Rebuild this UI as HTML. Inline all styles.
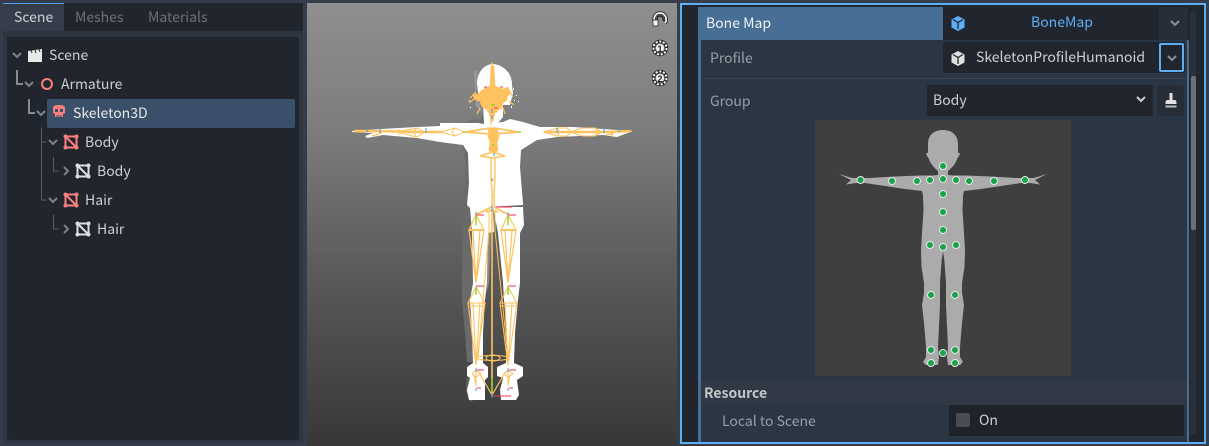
<!DOCTYPE html>
<html><head><meta charset="utf-8">
<style>
html,body{margin:0;padding:0;width:1209px;height:446px;overflow:hidden;background:#363d4a;}
body{position:relative;font-family:"Noto Sans CJK JP","Liberation Sans",sans-serif;font-size:14px;color:#cdcfd2;}
.a{position:absolute;}
.t{position:absolute;white-space:nowrap;line-height:20px;height:20px;}
svg{position:absolute;overflow:visible;}
</style></head><body>

<!-- LEFT DOCK -->
<div class="a" style="left:3px;top:3px;width:300px;height:440px;background:#262c36;"></div>
<div class="a" style="left:3px;top:3px;width:61px;height:28px;background:#363d4a;border-top:1px solid #569eea;box-sizing:border-box;"></div>
<div class="a" style="left:64px;top:3px;width:239px;height:28px;background:#21262e;"></div>
<div class="a" style="left:3px;top:31px;width:300px;height:412px;background:#2e3440;"></div>
<div class="t" style="left:14px;top:7px;">Scene</div>
<div class="t" style="left:75px;top:7px;color:#6c7078;">Meshes</div>
<div class="t" style="left:148px;top:7px;color:#6c7078;">Materials</div>
<div class="a" style="left:7px;top:37px;width:292px;height:403px;background:#21252d;border-radius:2px;"></div>
<div class="a" style="left:47px;top:99px;width:248px;height:29px;background:#3a5068;border-radius:2px;"></div>

<svg width="310" height="250" style="left:0;top:0" fill="none">
  <g stroke="#7d8188" stroke-width="2">
    <path d="M13 53l4 4 4-4M25 82l4 4 4-4M37 111l4 4 4-4M49 140l4 4 4-4M49 198l4 4 4-4"/>
    <path d="M64 167l4 4-4 4M64 225l4 4-4 4"/>
  </g>
  <path d="M17 70v14h6M29 99v14h6" stroke="#878b91" stroke-width="2"/>
  <path d="M41.500 128v72h5M41.500 142h5M53.500 157v14h5M53.500 215v14h5" stroke="#555a63" stroke-width="1"/>
  <path d="M28 51l14-2v4H28zM28 53h14v9H28z" fill="#e8e8e8"/>
  <path d="M31 50l1 3M35 50l1 3M39 49l1 3" stroke="#21252d"/>
  <circle cx="47" cy="84" r="5" stroke="#fc7f7f" stroke-width="2"/>
  <path d="M53 108c0-2 2-3 6-3s6 1 6 3v5l-2 1v3h-8v-3l-2-1z" fill="#fc7f7f"/>
  <path d="M55 109h3v3h-3zM60 109h3v3h-3z" fill="#3a5068"/>
  <path d="M57 115v2M59 115v2M61 115v2" stroke="#3a5068"/>
  <g stroke="#fc7f7f" stroke-width="2" fill="none">
    <path d="M65.500 136.500h11v11h-11zM65.500 136.500l11 11"/><path d="M65.500 194.500h11v11h-11zM65.500 194.500l11 11"/>
  </g>
  <g fill="#fc7f7f">
    <circle cx="65.500" cy="136.500" r="2"/><circle cx="76.500" cy="136.500" r="2"/><circle cx="65.500" cy="147.500" r="2"/><circle cx="76.500" cy="147.500" r="2"/>
    <circle cx="65.500" cy="194.500" r="2"/><circle cx="76.500" cy="194.500" r="2"/><circle cx="65.500" cy="205.500" r="2"/><circle cx="76.500" cy="205.500" r="2"/>
  </g>
  <g stroke="#e0e0e0" stroke-width="2" fill="none">
    <path d="M77.500 165.500h11v11h-11zM77.500 165.500l11 11"/><path d="M77.500 223.500h11v11h-11zM77.500 223.500l11 11"/>
  </g>
  <g fill="#e0e0e0">
    <circle cx="77.500" cy="165.500" r="2"/><circle cx="88.500" cy="165.500" r="2"/><circle cx="77.500" cy="176.500" r="2"/><circle cx="88.500" cy="176.500" r="2"/>
    <circle cx="77.500" cy="223.500" r="2"/><circle cx="88.500" cy="223.500" r="2"/><circle cx="77.500" cy="234.500" r="2"/><circle cx="88.500" cy="234.500" r="2"/>
  </g>
</svg>
<div class="t" style="left:49px;top:45px;">Scene</div>
<div class="t" style="left:61px;top:74px;">Armature</div>
<div class="t" style="left:73px;top:103px;color:#e6e8ea;">Skeleton3D</div>
<div class="t" style="left:85px;top:132px;">Body</div>
<div class="t" style="left:97px;top:161px;">Body</div>
<div class="t" style="left:85px;top:190px;">Hair</div>
<div class="t" style="left:97px;top:219px;">Hair</div>

<!-- VIEWPORT -->
<div class="a" style="left:307px;top:3px;width:370px;height:443px;background:linear-gradient(#8f8f8f 0,#7c7c7c 130px,#5a5a5a 270px,#373737 443px);"></div>
<svg width="1209" height="446" style="left:0;top:0" fill="none">
  <!-- shadows -->
  <path d="M462 145L470 147L470 205L463 207L465 190L466 165Z" fill="#6a6a6a" opacity=".85"/>
  <path d="M463 208L470 208L472 233L473 283L470 300L472 333L473 362L467 362L465 333L462 300L462 260Z" fill="#6a6a6a"/>
  <path d="M466 378L470 378L474 400L470 402L466 392Z" fill="#5c5c5c"/>
  <path d="M488 233L491 233L489 283L487 292Z" fill="#8a8a8a"/>
  <path d="M479 124L484 112L499 112L497 124Z" fill="#6b6b6b"/>
  <path d="M459 123L478 118L482 124Z" fill="#737373"/>
  <path d="M474 72L477 70L476 92L482 112L476 106Z" fill="#9a9a9a"/>
  <!-- hair / head -->
  <path d="M477 84C477 72 484 65 492 64C500 64 512 70 512 85L513 93L510 105L503 105L503 117L497 124L484 124L483 105L479 100Z" fill="#fff"/>
  <!-- sleeves + arms + shirt -->
  <path fill="#fff" d="M352 131L380 129L417 127L440 126L440 123L478 123L484 124L503 122L510 119L523 122L540 127L573 127L603 129L633 131L617 137L603 135L557 137L537 140L521 150L520 167L523 203L523 205L470 208L467 205L469 183L468 153L463 145L440 142L417 138L383 135L367 138L365 136L373 133L352 132Z"/>
  <!-- legs -->
  <path fill="#fff" d="M470 207L493 207L494 232L488 233L487 283L485 300L483 333L483 363L488 367L488 377L485 380L485 400L469 400L467 390L470 378L467 376L467 367L473 363L472 333L470 300L473 283L472 233Z"/>
  <path fill="#fff" d="M493 207L523 207L524 225L520 233L520 283L518 300L515 333L514 363L523 367L523 376L517 380L519 395L516 400L501 400L500 390L503 378L497 376L497 367L506 363L507 333L504 300L503 283L498 233Z"/>
  <!-- speckle -->
  <g fill="#fff">
    <rect x="469" y="100" width="1" height="1"/><rect x="474" y="95" width="2" height="1"/><rect x="513" y="88" width="1" height="2"/><rect x="516" y="95" width="1" height="1"/><rect x="514" y="100" width="1" height="1"/><rect x="511" y="106" width="1" height="2"/><rect x="470" y="107" width="1" height="1"/><rect x="518" y="101" width="1" height="1"/>
  </g>
  <!-- skeleton -->
  <g stroke="#fec35e" stroke-width="1.200">
    <!-- head mass -->
    <path fill="#fec35e" stroke-width=".5" d="M491 66L494 66L495 86L503 89L508 87L511 93L507 97L507 100L503 103L502 108L498 110L497 112L495 113L493 121L492 122L491 121L489 113L486 109L482 107L480 103L482 102L478 101L474 99L473 94L478 94L481 91L485 88L490 86Z"/>
    <path d="M476 92L470 98M474 99L469 103M510 92L513 97M509 101L514 105M480 108L477 114M503 108L505 114"/>
    <path d="M492 62v4M491 119v6"/>
    <!-- arms -->
    <path d="M354 131L380 131L417 132L442 132" stroke-width="2.600"/>
    <path d="M544 132L569 132L606 132L631 131" stroke-width="2.600"/>
    <path d="M396 132L417 128L425 132L417 137ZM399 129V135M417 128L413 132L417 137M441 132L455 128L465 132L455 136ZM455 128L452 132L455 136" stroke-width="1"/>
    <path d="M544 132L557 128L567 128L572 132L567 136L557 136ZM557 128L560 132L557 136M570 132L583 128L595 128L602 132L595 136L583 136ZM595 128L598 132L595 136" stroke-width="1"/>
    <path d="M358 132L364 131M366 131L376 132M372 136L382 133M610 132L620 131M620 132L628 131M606 135L614 133M614 137L610 134" stroke-width="1.300"/>
    <!-- clavicle -->
    <path d="M465 132L491 128M518 132L494 128M465 132L490 134M518 132L494 134" stroke-width="1.800"/>
    <!-- chest -->
    <path fill="#fec35e" stroke-width=".8" d="M489 128H497L499 136L497 142L498 150L495 153H492L489 150L490 142L488 136Z"/>
    <path d="M480 156L493 152L505 156M480 156L493 158L505 156" stroke-width="1.500"/>
    <!-- spine -->
    <path d="M491 157L491 179L492 191L492 206M495 157L495 179L494 191L494 206" stroke-width="1.400"/>
    <path d="M491 180H495M491 196H495" stroke-width="1"/>
    <!-- hips -->
    <path d="M492 207L475 215M494 207L509 215M486 212L492 210L498 212" stroke-width="1.800"/>
    <path d="M492 210V396" stroke-width="1.600"/>
    <path d="M489 210V230M495 210V230" stroke-width="1"/>
    <!-- upper legs -->
    <path d="M476 215L469 230H484ZM469 230L476 283L484 230M473 230L476 283M480 230L476 283" stroke-width="1.200"/>
    <path d="M508 215L501 230H516ZM501 230L508 283L516 230M505 230L508 283M512 230L508 283" stroke-width="1.200"/>
    <path d="M469 230H484M501 230H516" stroke-width="2"/>
    <path d="M489 230L478 358M495 230L508 358" stroke-width="1"/>
    <!-- lower legs -->
    <path d="M476 287L468 303H485ZM468 303L476 365L485 303M473 303L476 365M480 303L476 365M468 306H485" stroke-width="1.100"/>
    <path d="M508 287L500 303H517ZM500 303L508 365L517 303M505 303L508 365M512 303L508 365M500 306H517" stroke-width="1.100"/>
    <!-- ankle ellipse -->
    <ellipse cx="493" cy="358" rx="16" ry="2.500" stroke-width="1"/>
    <ellipse cx="493" cy="358" rx="7" ry="3" stroke-width="1"/>
    <!-- feet -->
    <path d="M476 370L472 374L476 377L481 374ZM508 370L504 374L508 377L513 374ZM476 372V386M474 375L476 385M508 372V386M510 375L508 385" stroke-width="1"/>
    <path d="M492 395L478 371M492 395L506 371" stroke-width="1.200"/>
  </g>
  <!-- gizmo marks -->
  <path d="M476 215H484M508 215H516M476 286H484M508 286H516M477 370H484M509 370H516M477 388H481M509 388H513M493 396H511M496 207H512" stroke="#f2354f" stroke-width="1"/>
  <path d="M476 216V225M508 216V225M476 287V295M508 287V295M492 378V392" stroke="#79d11f" stroke-width="1.300"/>
  <path d="M492 206V212M492 393V398M476 212V215M508 212V215M476 368V372M508 368V372M476 388V391M508 388V391M380 128V133M426 128V133M557 128V133M604 128V133M367 129V132M619 129V132M492 109V113M492 115V119M494 153V156M492 178V181" stroke="#3f9ae8" stroke-width="1"/>
  <path d="M465 132H463M518 132H521M492 145H494M491 105H495" stroke="#79d11f" stroke-width="1.300"/>
  <path d="M484 87H487M500 87H503M494 108H498" stroke="#f2354f" stroke-width="1"/>
  <!-- viewport gizmo icons -->
  <g fill="none">
    <path d="M656 24C652 19 655 13 660 13S668 19 665 23" stroke="#222" stroke-width="3.600"/>
    <path d="M656 24C652 19 655 13 660 13S668 19 665 23" stroke="#f2f2f2" stroke-width="1.800"/>
    <path d="M658 21C656 18 658 16 660 16S664 18 663 21" stroke="#222" stroke-width="1.400"/>
    <path d="M653 20H658V26H653Z" fill="#f2f2f2" stroke="#222" stroke-width=".7"/>
    <circle cx="660" cy="48" r="6.500" stroke="#222" stroke-width="3.400"/>
    <circle cx="660" cy="48" r="6.500" stroke="#f4f4f4" stroke-width="2" stroke-dasharray="2.200 1.500"/>
    <circle cx="660" cy="48" r="4" fill="#f2f2f2"/>
    <circle cx="660" cy="78" r="6.500" stroke="#222" stroke-width="3.400"/>
    <circle cx="660" cy="78" r="6.500" stroke="#f4f4f4" stroke-width="2" stroke-dasharray="2.200 1.500"/>
    <circle cx="660" cy="78" r="4" fill="#f2f2f2"/>
  </g>
  <text x="660" y="52" font-size="9" font-weight="bold" fill="#222" text-anchor="middle" font-family="Liberation Sans, sans-serif">1</text>
  <text x="660" y="82" font-size="9" font-weight="bold" fill="#222" text-anchor="middle" font-family="Liberation Sans, sans-serif">2</text>
</svg>

<!-- RIGHT INSPECTOR -->
<div class="a" style="left:680px;top:3px;width:526px;height:441px;box-sizing:border-box;border:2px solid #5eaef5;background:#21262e;"></div>
<div class="a" style="left:698px;top:40px;width:3px;height:402px;background:#476f96;"></div>
<div class="a" style="left:698px;top:7px;width:245px;height:33px;background:#476f96;"></div>
<div class="a" style="left:943px;top:7px;width:245px;height:33px;background:#21262e;"></div>
<div class="a" style="left:1159px;top:7px;width:29px;height:33px;background:#282e38;"></div>
<div class="a" style="left:701px;top:40px;width:486px;height:402px;background:#2a3644;"></div>
<div class="a" style="left:1187px;top:40px;width:2px;height:402px;background:#476f96;"></div>
<div class="a" style="left:702px;top:78px;width:484px;height:1px;background:#3a4553;"></div>
<div class="a" style="left:943px;top:42px;width:242px;height:31px;background:#21262e;border-radius:2px;"></div>
<div class="a" style="left:1159px;top:43px;width:25px;height:29px;box-sizing:border-box;border:2px solid #5eaef5;border-radius:2px;"></div>
<div class="a" style="left:927px;top:85px;width:226px;height:31px;background:#21262e;border-radius:2px;"></div>
<div class="a" style="left:1157px;top:85px;width:27px;height:31px;background:#262d37;border-radius:2px;"></div>
<div class="a" style="left:815px;top:120px;width:256px;height:256px;background:#3f3f3f;"></div>
<div class="a" style="left:701px;top:380px;width:486px;height:25px;background:#323946;"></div>
<div class="a" style="left:949px;top:405px;width:235px;height:31px;background:#1e232a;border-radius:2px;"></div>
<div class="a" style="left:956px;top:413px;width:14px;height:14px;background:#484c57;border-radius:2px;"></div>
<!-- scrollbar -->
<div class="a" style="left:1190px;top:12px;width:6px;height:423px;background:#2a2f39;border-radius:3px;"></div>
<div class="a" style="left:1191px;top:76px;width:5px;height:154px;background:#6b7078;border-radius:2px;"></div>

<div class="t" style="left:706px;top:13px;color:#f0f2f4;">Bone Map</div>
<div class="t" style="left:710px;top:48px;color:#9a9ea4;">Profile</div>
<div class="t" style="left:710px;top:91px;color:#9a9ea4;">Group</div>
<div class="t" style="left:1031px;top:12px;color:#5eaef5;">BoneMap</div>
<div class="t" style="left:976px;top:47px;">SkeletonProfileHumanoid</div>
<div class="t" style="left:933px;top:90px;">Body</div>
<div class="t" style="left:704px;top:383px;font-weight:bold;color:#c4c6ca;">Resource</div>
<div class="t" style="left:722px;top:411px;color:#9a9ea4;">Local to Scene</div>
<div class="t" style="left:979px;top:410px;">On</div>

<svg width="1209" height="446" style="left:0;top:0" fill="none">
  <path d="M958 16l6.500 3.500v8L958 31l-6.500-3.500v-8z" fill="#5eaef5"/>
  <path d="M953 19.500l5 3 5-3M958 23v6" stroke="#21262e" stroke-width="1.300"/>
  <path d="M958 51l6.500 3.500v8L958 66l-6.500-3.500v-8z" fill="#e0e0e0"/>
  <path d="M953 54.500l5 3 5-3M958 58v6" stroke="#21262e" stroke-width="1.300"/>
  <path d="M1171 21l4 4 4-4M1168 56l4 4 4-4" stroke="#8b8e94" stroke-width="2"/>
  <path d="M1137 97l4 4 4-4" stroke="#cdcfd2" stroke-width="2"/>
  <path d="M1169.500 93h3v7h3l1 2v2h-11v-2l1-2h3z" fill="#e0e0e0"/>
  <path d="M1165.500 105.500h11v2h-11z" fill="#bdbdbd"/>
  <!-- body silhouette -->
  <g fill="#ababab">
    <path d="M943.500 130C934 130 928 135 928 144L928 152.500 926 153.500 927 156 928.500 158C930 163 934 168 938 171L938 175 932 175.500 920 175.500 895 176.500 870 178 852 178 839 174 849 179 851 180 846 184.500 856 183 865 183 885 186 905 189 922 191 923 196 923.500 210 922 233 921 250 921.500 267 924 283 924 293 922 305 924 323 926 347 926 357 923 362 926 365 938 365 939 357 938 347 940 305 940 283 941.700 260 942.700 253 943.500 250Z"/>
    <path d="M942.500 130C952 130 958 135 958 144L958 152.500 960 153.500 959 156 957.500 158C956 163 952 168 948 171L948 175 954 175.500 966 175.500 991 176.500 1016 178 1034 178 1047 174 1037 179 1035 180 1040 184.500 1030 183 1021 183 1001 186 981 189 964 191 963 196 962.500 210 964 233 965 250 964.500 267 962 283 962 293 964 305 962 323 960 347 960 357 963 362 960 365 948 365 947 357 948 347 946 305 946 283 944.300 260 943.300 253 942.500 250Z"/>
  </g>
  <g fill="#16a349" stroke="#e8e8e8" stroke-width="1">
    <circle cx="860.500" cy="180" r="3.500"/><circle cx="892" cy="181" r="3.500"/><circle cx="917" cy="181" r="3.500"/><circle cx="930" cy="180" r="3.500"/><circle cx="943" cy="179" r="3.500"/><circle cx="956" cy="180" r="3.500"/><circle cx="969" cy="181" r="3.500"/><circle cx="994" cy="181" r="3.500"/><circle cx="1025" cy="180" r="3.500"/>
    <circle cx="943" cy="166" r="3.500"/><circle cx="943" cy="194" r="3.500"/><circle cx="943" cy="212" r="3.500"/><circle cx="943" cy="230" r="3.500"/>
    <circle cx="930" cy="245" r="3.500"/><circle cx="943" cy="247" r="3.500"/><circle cx="956" cy="245" r="3.500"/>
    <circle cx="931" cy="295" r="3.500"/><circle cx="955" cy="295" r="3.500"/>
    <circle cx="931" cy="350" r="3.500"/><circle cx="943" cy="353" r="3.500"/><circle cx="955" cy="350" r="3.500"/>
    <circle cx="931" cy="363" r="3.500"/><circle cx="955" cy="363" r="3.500"/>
  </g>
</svg>
</body></html>
